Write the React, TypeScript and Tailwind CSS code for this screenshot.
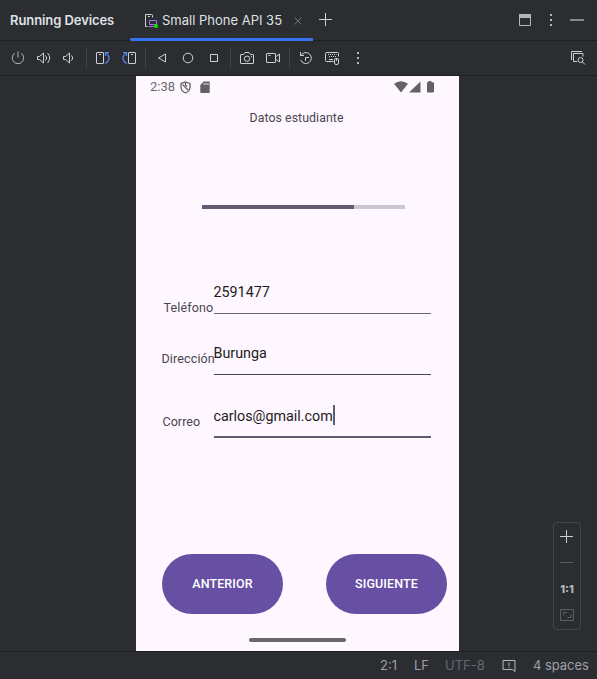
import React from "react";

type IconProps = { children: React.ReactNode; className?: string };

function Icon({ children, className = "" }: IconProps) {
  return (
    <svg width="16" height="16" viewBox="0 0 16 16" fill="none" stroke="#ced0d6" strokeWidth="1" className={`block shrink-0 ${className}`}>
      {children}
    </svg>
  );
}

function Separator() {
  return <div className="h-5 w-px bg-[#43454a]" />;
}

function Group({ children }: { children: React.ReactNode }) {
  return <div className="flex items-center gap-2.5 px-2">{children}</div>;
}

function VerticalDots({ className = "" }: { className?: string }) {
  return (
    <Icon className={className}>
      <g fill="#b4b6bc" stroke="none">
        <rect x="7" y="2" width="2" height="2" />
        <rect x="7" y="7" width="2" height="2" />
        <rect x="7" y="12" width="2" height="2" />
      </g>
    </Icon>
  );
}

function Header() {
  return (
    <header className="flex h-[41px] shrink-0 border-b border-[#1e1f22]">
      <div className="w-[130px] pl-2.5 text-[13px] leading-[41px] font-semibold tracking-[-0.080px] text-[#dfe1e5]">Running Devices</div>
      <div className="flex h-[41px] w-[183px] shrink-0 flex-col">
        <div className="flex h-[38px] items-center pt-[3px] pl-[13px]">
          <svg width="16" height="16" viewBox="0 0 16 16" fill="none" className="block shrink-0">
            <path d="M4.500 13.500H2.500V1.500H8.500Q9.500 1.500 9.500 2.500V4.500" stroke="#ced0d6" />
            <path d="M5 3.500H7" stroke="#ced0d6" />
            <path d="M6.500 7.500H13.500V11.500H6.500ZM5.500 13.500H12" stroke="#a571e6" />
            <circle cx="13" cy="13" r="2" fill="#00ef00" />
          </svg>
          <span className="ml-[3px] w-[120px] text-[13px] whitespace-nowrap text-[#dfe1e5]">Small Phone API 35</span>
          <Icon className="ml-2">
            <path d="m4.500 4.500 7 7m0-7-7 7" stroke="#6f737a" />
          </Icon>
        </div>
        <div className="h-[3px] rounded-l-full bg-[#3574f0]" />
      </div>
      <Icon className="mt-3 ml-[5px]">
        <path d="M7.500 1v13M1 7.500h13" stroke="#ced0d6" />
      </Icon>
      <div className="ml-auto flex h-10 items-center gap-2.5 pr-3">
        <Icon>
          <path d="M2.500 2.500h11v11h-11z" stroke="#b4b6bc" />
          <path d="M2 2h12v4H2z" fill="#b4b6bc" stroke="none" />
        </Icon>
        <VerticalDots />
        <Icon>
          <path d="M1 8h14" strokeWidth="2" stroke="#87898e" />
        </Icon>
      </div>
    </header>
  );
}

function Toolbar() {
  return (
    <div className="flex h-[35px] shrink-0 items-center border-b border-[#1e1f22] pl-0.5">
      <Group>
        <Icon>
          <path d="M8 1.500v6M4.700 3.300a5.700 5.700 0 1 0 6.600 0" stroke="#b4b6bc" />
        </Icon>
        <Icon>
          <path d="M1.500 6.500h2l4-3.500v10l-4-3.500h-2zM9.500 5.500q2.500 2.500 0 5M11.500 3q4.500 5 0 10" />
        </Icon>
        <Icon>
          <path d="M1.500 6.500h2l4-3.500v10l-4-3.500h-2zM9.500 5.500q2.500 2.500 0 5" />
        </Icon>
      </Group>
      <Separator />
      <Group>
        <Icon>
          <rect x="1.500" y="2.500" width="7" height="11" rx="0.500" />
          <path d="M4 4.500h2" />
          <path d="M10 13.500q4.500-2 4-6.500-.600-2.800-3.500-4.500M14 2.500h-3.500V6" stroke="#548af7" strokeWidth="1.200" />
        </Icon>
        <Icon>
          <rect x="7.500" y="2.500" width="7" height="11" rx="0.500" />
          <path d="M10 4.500h2" />
          <path d="M6 13.500q-4.500-2-4-6.500.600-2.800 3.500-4.500M2 2.500h3.500V6" stroke="#548af7" strokeWidth="1.200" />
        </Icon>
      </Group>
      <Separator />
      <Group>
        <Icon>
          <path d="M11.500 4v8L4.500 8z" />
        </Icon>
        <Icon>
          <circle cx="8" cy="8" r="4.800" />
        </Icon>
        <Icon>
          <path d="M4.500 4.500h7v7h-7z" />
        </Icon>
      </Group>
      <Separator />
      <Group>
        <Icon>
          <path d="M2 4.500h2.500L6 2.500h4l1.500 2H14q.5 0 .5.500v8q0 .5-.5.500H2q-.5 0-.5-.5V5q0-.5.500-.5Z" />
          <circle cx="8" cy="8.700" r="2.700" />
          <path d="M12 6.500h1" />
        </Icon>
        <Icon>
          <rect x="1.500" y="3.500" width="9" height="9" rx="0.500" />
          <path d="m10.500 7 4-3v8l-4-3M3.500 5.500h2" />
        </Icon>
      </Group>
      <Separator />
      <Group>
        <Icon>
          <path d="M2.500 2v3.500H6M3 5.500a5.500 5.500 0 1 1-.3 4.500M7.500 11V7.500H11" />
        </Icon>
        <Icon>
          <path d="M9.500 11.500H2.500q-1 0-1-1v-7q0-1 1-1h11q1 0 1 1v3" />
          <path d="M4 4.500h8.500M5 6.500h7" strokeDasharray="1 1" />
          <path d="M5 9.500h4" />
          <rect x="10.500" y="8.500" width="4" height="6" rx="1.500" />
          <path d="M12.500 9v2" />
        </Icon>
        <VerticalDots />
      </Group>
      <Icon className="mr-[11px] ml-auto">
        <path d="M1.500 10V1.500H12M7 11.500H3.500v-8h9.500v3" />
        <circle cx="10.500" cy="10" r="2.500" />
        <path d="m12.500 12 2.500 2.500" />
      </Icon>
    </div>
  );
}

function StatusIcons() {
  return (
    <svg width="40" height="12" viewBox="0 0 40 12" fill="#646066" className="block">
      <path d="M0 2.700Q7-2.300 14 2.700L7 11.500Z" />
      <path d="M15 11.500 26.500.5v11Z" />
      <path d="M33 1.200h1.500V0h3v1.200H39q1 0 1 .8v8.500q0 1-1 1h-5q-1 0-1-1Z" />
    </svg>
  );
}

function Phone() {
  return (
    <main className="flex h-[575px] w-[323px] flex-col bg-[#fef7ff] font-[Roboto,sans-serif] whitespace-nowrap text-[#49454f]">
      <div className="flex h-[22px] items-center pl-3.5">
        <span className="w-[26px] text-[13px] leading-[22px] text-[#6b676e]">2:38</span>
        <svg width="11" height="13" viewBox="0 0 11 13" fill="none" stroke="#646066" strokeWidth="1.300" className="ml-1 block">
          <path d="M5.500 1 10 2.500V6q0 4-4.500 6Q1 10 1 6V2.500ZM2.500 3.500 8 9" />
          <path d="M5.500 1v3l1.500 1.500" />
        </svg>
        <svg width="10" height="12" viewBox="0 0 10 12" className="ml-[9px] block">
          <path d="M3.500.5H9q.700 0 .700.700v10q0 .700-.700.700H1q-.700 0-.700-.700V4Z" fill="#646066" />
          <path d="M4 2v2M6 2v2M8 2v2" stroke="#fef7ff" strokeWidth=".8" />
        </svg>
        <div className="mr-[25px] ml-auto">
          <StatusIcons />
        </div>
      </div>
      <h1 className="mt-3 h-4 pr-0.5 text-center text-[12.300px] leading-4 tracking-[0.080px]">Datos estudiante</h1>
      <div className="mt-[79px] ml-[66px] h-1 w-[203px] bg-[#cdc7d1]">
        <div className="h-full w-[152px] bg-[#625b71]" />
      </div>
      <div className="mt-[74px] flex h-[31px]">
        <label className="w-[77.500px] pt-[17px] pl-[27.500px] text-[12.500px] leading-4 tracking-[0.140px]">Teléfono</label>
        <div className="h-[31px] w-[217.500px] border-b border-[#6b676e] text-[14.300px] leading-[18px] text-[#1d1b20]">2591477</div>
      </div>
      <div className="mt-[30px] flex h-[31px]">
        <label className="w-[77.500px] pt-[7px] pl-[25.500px] text-[12.500px] leading-4 tracking-[0.140px]">Dirección</label>
        <div className="h-[31px] w-[217.500px] border-b border-[#49454f] text-[14.300px] leading-[18px] text-[#1d1b20]">Burunga</div>
      </div>
      <div className="mt-[30px] flex h-[33px]">
        <label className="w-[77.500px] pt-[9px] pl-[26.500px] text-[12.500px] leading-4 tracking-[0.050px]">Correo</label>
        <div className="flex h-[33px] w-[217.500px] border-b-2 border-[#625b71] text-[14.300px] leading-[22px] text-[#1d1b20]">
          <span className="w-[119.500px]">carlos@gmail.com</span>
          <span className="h-5 w-0.5 bg-[#625b71]" />
        </div>
      </div>
      <div className="mt-[116px] ml-[26px] flex gap-[43px] text-[12.500px] font-medium tracking-[0.120px] text-white">
        <button className="h-[60px] w-[121px] rounded-[30px] bg-[#6750a4]">ANTERIOR</button>
        <button className="h-[60px] w-[121px] rounded-[30px] bg-[#6750a4]">SIGUIENTE</button>
      </div>
      <div className="mt-6 ml-[113px] h-1 w-[97px] rounded-full bg-[#6a666c]" />
    </main>
  );
}

function ZoomControls() {
  return (
    <aside className="mr-4 mb-[21px] flex h-[108px] w-7 flex-col items-center self-end rounded border border-[#43454a]">
      <Icon className="mt-1.5">
        <path d="M7.500 1v13M1 7.500h13" />
      </Icon>
      <Icon className="mt-2.5">
        <path d="M1 7.500h13" stroke="#5a5d63" />
      </Icon>
      <span className="mt-2.5 h-4 text-[11px] leading-4 font-extrabold text-[#b4b8bf]">1:1</span>
      <Icon className="mt-2.5">
        <path d="M1.500 2.500h13v11h-13zM4.500 8.500v-3h3.500M12 7.500v3h-3.500" stroke="#5a5d63" />
      </Icon>
    </aside>
  );
}

function StatusBar() {
  return (
    <footer className="flex h-7 shrink-0 items-center border-t border-[#1e1f22] pl-[380px] text-[13px] whitespace-nowrap text-[#9da0a8]">
      <span className="w-[34px]">2:1</span>
      <span className="w-[31px]">LF</span>
      <span className="w-[56px] text-[#5f6a78]">UTF-8</span>
      <Icon>
        <path d="M2 2.500h12v11l-2.500-2H2zM8 4.500v3.500M8 9v1" stroke="#b4b8bf" />
      </Icon>
      <span className="ml-4 tracking-[-0.050px]">4 spaces</span>
    </footer>
  );
}

export default function App() {
  return (
    <div className="flex h-[679px] w-[597px] flex-col overflow-hidden bg-[#2b2d30] font-[Inter,sans-serif]">
      <Header />
      <Toolbar />
      <div className="flex h-[575px] justify-between pl-[136px]">
        <Phone />
        <ZoomControls />
      </div>
      <StatusBar />
    </div>
  );
}
